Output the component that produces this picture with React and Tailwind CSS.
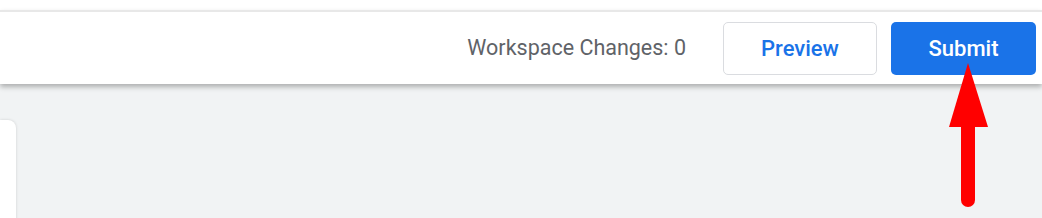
export default function App() {
  return (
    <div className="relative w-[1042px] h-[218px] overflow-hidden bg-[#f1f3f4] font-['Roboto',sans-serif]">
      <div className="h-[10px] bg-white" />
      <div className="relative z-10 flex h-[74px] items-center justify-end border-t-2 border-[#e8e8e8] bg-white pr-[6px] shadow-[0_3px_5px_rgba(0,0,0,0.28)]">
        <span className="mr-[37px] text-[21.5px] text-[#5f6368]">Workspace Changes: 0</span>
        <button className="mr-[14px] h-[53px] w-[154px] rounded-[5px] border border-[#dadce0] bg-white text-[22px] font-medium text-[#1a73e8]">
          Preview
        </button>
        <button className="h-[53px] w-[145px] rounded-[5px] bg-[#1a73e8] text-[22px] font-medium text-white">
          Submit
        </button>
      </div>
      <div className="absolute left-0 top-[120px] h-[120px] w-[16px] rounded-tr-[8px] bg-white shadow-[0_0_3px_rgba(0,0,0,0.15)]" />
      <svg className="absolute left-0 top-0 z-20" width="1042" height="218">
        <polygon points="968,63 949,127 988,127" fill="#ff0000" />
        <line x1="968" y1="120" x2="968" y2="200" stroke="#ff0000" strokeWidth="14" strokeLinecap="round" />
      </svg>
    </div>
  );
}
